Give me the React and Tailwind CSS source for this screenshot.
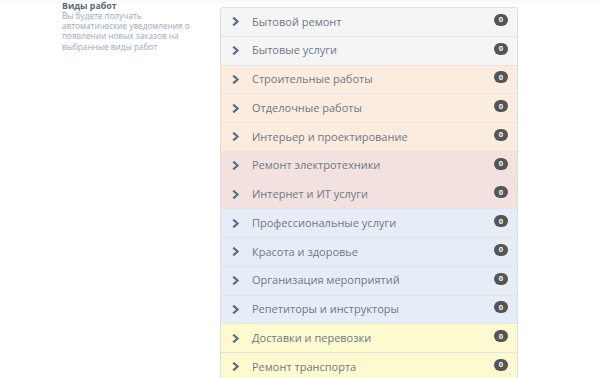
const rows = [
    { title: 'Бытовой ремонт', bg: 'bg-[#f5f5f5]' },
    { title: 'Бытовые услуги', bg: 'bg-[#f5f5f5]' },
    { title: 'Строительные работы', bg: 'bg-[#fcebdf]' },
    { title: 'Отделочные работы', bg: 'bg-[#fcebdf]' },
    { title: 'Интерьер и проектирование', bg: 'bg-[#fcebdf]' },
    { title: 'Ремонт электротехники', bg: 'bg-[#f2e1df]' },
    { title: 'Интернет и ИТ услуги', bg: 'bg-[#f2e1df]' },
    { title: 'Профессиональные услуги', bg: 'bg-[#e6edf6]' },
    { title: 'Красота и здоровье', bg: 'bg-[#e6edf6]' },
    { title: 'Организация мероприятий', bg: 'bg-[#e6edf6]' },
    { title: 'Репетиторы и инструкторы', bg: 'bg-[#e6edf6]' },
    { title: 'Доставки и перевозки', bg: 'bg-[#fefacf]' },
    { title: 'Ремонт транспорта', bg: 'bg-[#fefacf]' },
];

const Chevron = () => (
    <svg width="7" height="9" viewBox="0 0 7 9" className="shrink-0">
        <path d="M1.2 0.6 L5.6 4.5 L1.2 8.4" fill="none" stroke="#5a6f86" strokeWidth="2.2" />
    </svg>
);

const App = () => {
    return (
        <div className="w-[600px] h-[378px] overflow-hidden bg-white font-['Open_Sans',sans-serif]">
            <div className="h-[3px] bg-[#fafafa]"></div>
            <div className="flex pl-[62px]">
                {/* Left description */}
                <div className="w-[158px] -mt-[2.3px]">
                    <div className="text-[8.8px] font-bold leading-[10px] text-[#5b6878]">Виды работ</div>
                    <div className="text-[8.2px] leading-[10.3px] text-[#9ca8b6]">
                        Вы будете получать<br />
                        автоматические уведомления о<br />
                        появлении новых заказов на<br />
                        выбранные виды работ
                    </div>
                </div>

                {/* Categories list */}
                <div className="mt-[4px] w-[298px] border border-[#dedede] rounded-t-[3px] overflow-hidden">
                    {rows.map((row, i) => (
                        <div
                            key={i}
                            className={`${row.bg} h-[28.75px] flex items-center pl-[11px] pr-[9px] border-b border-[#e4e4e4]`}
                        >
                            <Chevron />
                            <span className="ml-[13px] text-[11px] text-[#6e7987] flex-1">{row.title}</span>
                            <span className="-mt-[4px] w-[14px] h-[12px] rounded-full bg-[#555555] text-white text-[7.5px] font-bold flex items-center justify-center">0</span>
                        </div>
                    ))}
                </div>
            </div>
        </div>
    );
};

export default App;
